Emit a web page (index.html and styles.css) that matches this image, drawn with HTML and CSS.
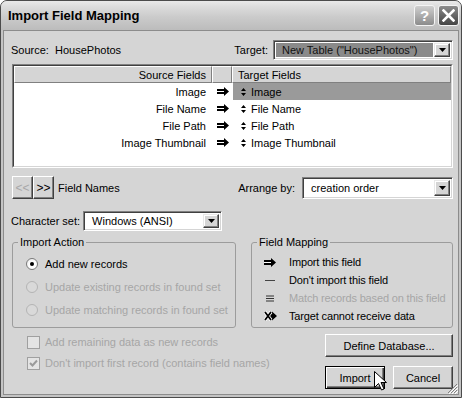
FILE: index.html
```html
<!DOCTYPE html>
<html>
<head>
<meta charset="utf-8">
<title>Import Field Mapping</title>
<link rel="stylesheet" href="styles.css">
</head>
<body>
<div class="window">
  <div class="titlebar">
    <span class="title">Import Field Mapping</span>
    <div class="tbtns">
      <span class="tbtn help">?</span>
      <span class="tbtn close"><svg width="13" height="13" viewBox="0 0 13 13"><path d="M1.5 1.5L11.5 11.5M11.5 1.5L1.5 11.5" stroke="#fff" stroke-width="2.6" stroke-linecap="square"/></svg></span>
    </div>
  </div>
  <div class="client">
    <div class="source-row">
      <span class="source">Source:&nbsp; HousePhotos</span>
      <div class="target">
        <span>Target:</span>
        <div class="combo combo-target">
          <span class="val val-dark">New Table ("HousePhotos")</span>
          <span class="drop"><svg width="7" height="4" viewBox="0 0 7 4"><path d="M0 0h7L3.5 4z"/></svg></span>
        </div>
      </div>
    </div>

    <div class="table">
      <div class="table-inner">
        <div class="grid">
          <div class="hcell hsrc">Source Fields</div>
          <div class="hcell harrow"></div>
          <div class="hcell htgt">Target Fields</div>

          <div class="src">Image</div>
          <div class="arr"><svg class="bigarrow" width="12" height="9" viewBox="0 0 12 9"><path d="M0 2h7V0l5 4.5L7 9V7H0z"/><path d="M0 4.5h7" stroke="#fff" stroke-width="1"/></svg></div>
          <div class="tgt sel"><svg class="updown" width="5" height="8" viewBox="0 0 5 8"><path d="M2.5 0L5 3H0zM0 5h5L2.5 8z"/></svg>Image</div>

          <div class="src">File Name</div>
          <div class="arr"><svg class="bigarrow" width="12" height="9" viewBox="0 0 12 9"><path d="M0 2h7V0l5 4.5L7 9V7H0z"/><path d="M0 4.5h7" stroke="#fff" stroke-width="1"/></svg></div>
          <div class="tgt"><svg class="updown" width="5" height="8" viewBox="0 0 5 8"><path d="M2.5 0L5 3H0zM0 5h5L2.5 8z"/></svg>File Name</div>

          <div class="src">File Path</div>
          <div class="arr"><svg class="bigarrow" width="12" height="9" viewBox="0 0 12 9"><path d="M0 2h7V0l5 4.5L7 9V7H0z"/><path d="M0 4.5h7" stroke="#fff" stroke-width="1"/></svg></div>
          <div class="tgt"><svg class="updown" width="5" height="8" viewBox="0 0 5 8"><path d="M2.5 0L5 3H0zM0 5h5L2.5 8z"/></svg>File Path</div>

          <div class="src">Image Thumbnail</div>
          <div class="arr"><svg class="bigarrow" width="12" height="9" viewBox="0 0 12 9"><path d="M0 2h7V0l5 4.5L7 9V7H0z"/><path d="M0 4.5h7" stroke="#fff" stroke-width="1"/></svg></div>
          <div class="tgt"><svg class="updown" width="5" height="8" viewBox="0 0 5 8"><path d="M2.5 0L5 3H0zM0 5h5L2.5 8z"/></svg>Image Thumbnail</div>
        </div>
      </div>
    </div>

    <div class="nav-row">
      <span class="btn navbtn disabled">&lt;&lt;</span>
      <span class="btn navbtn">&gt;&gt;</span>
      <span class="fieldnames">Field Names</span>
      <div class="arrange">
        <span>Arrange by:</span>
        <div class="combo combo-arrange">
          <span class="val">creation order</span>
          <span class="drop"><svg width="7" height="4" viewBox="0 0 7 4"><path d="M0 0h7L3.5 4z"/></svg></span>
        </div>
      </div>
    </div>

    <div class="char-row">
      <span>Character set:</span>
      <div class="combo combo-char">
        <span class="val">Windows (ANSI)</span>
        <span class="drop"><svg width="7" height="4" viewBox="0 0 7 4"><path d="M0 0h7L3.5 4z"/></svg></span>
      </div>
    </div>

    <div class="groups">
      <fieldset class="group group-action">
        <legend>Import Action</legend>
        <div class="radios">
          <div class="radio-row"><span class="radio checked"></span><span>Add new records</span></div>
          <div class="radio-row disabled"><span class="radio"></span><span>Update existing records in found set</span></div>
          <div class="radio-row disabled"><span class="radio"></span><span>Update matching records in found set</span></div>
        </div>
      </fieldset>
      <fieldset class="group group-mapping">
        <legend>Field Mapping</legend>
        <div class="legend-list">
          <div class="map-row"><span class="map-icon"><svg width="12" height="9" viewBox="0 0 12 9"><path d="M0 2h7V0l5 4.5L7 9V7H0z"/><path d="M0 4.5h7" stroke="#fff" stroke-width="1"/></svg></span><span>Import this field</span></div>
          <div class="map-row"><span class="map-icon"><svg width="12" height="9" viewBox="0 0 12 9"><path d="M1 4.5h10" stroke="#444" stroke-width="1"/></svg></span><span>Don't import this field</span></div>
          <div class="map-row disabled"><span class="map-icon"><svg width="12" height="9" viewBox="0 0 12 9"><path d="M2 2h8M2 4.5h8M2 7h8" stroke="#333" stroke-width="1.2"/></svg></span><span>Match records based on this field</span></div>
          <div class="map-row"><span class="map-icon"><svg width="13" height="10" viewBox="0 0 13 10"><path d="M3 3h5V0.5l5 4.5-5 4.5V7H3z"/><path d="M1 1l6 8M7 1L1 9" stroke="#fff" stroke-width="3.4"/><path d="M1 1l6 8M7 1L1 9" stroke="#000" stroke-width="1.8"/></svg></span><span>Target cannot receive data</span></div>
        </div>
      </fieldset>
    </div>

    <div class="bottom">
      <div class="checks">
        <div class="check-row"><span class="checkbox"></span><span>Add remaining data as new records</span></div>
        <div class="check-row"><span class="checkbox"><svg width="9" height="9" viewBox="0 0 9 9"><path d="M1 4l2.5 2.5L8 1.5" stroke="#9a9a9a" stroke-width="2" fill="none"/></svg></span><span>Don't import first record (contains field names)</span></div>
      </div>
      <div class="actions">
        <span class="btn wide">Define Database...</span>
        <div class="action-row">
          <span class="btn small default">Import</span>
          <span class="btn small">Cancel</span>
        </div>
      </div>
    </div>

    <svg class="grip" width="11" height="11" viewBox="0 0 11 11"><path d="M10 1L1 10M10 4L4 10M10 7L7 10" stroke="#808080" stroke-width="1"/><path d="M11 2L2 11M11 5L5 11M11 8L8 11" stroke="#fff" stroke-width="1"/></svg>
  </div>

  <svg class="cursor" width="13" height="20" viewBox="0 0 13 20"><path d="M0.5 0.5V16.5L4.5 12.5L7.5 19L10 18L7 11.5H12.5Z" fill="#fff" stroke="#000" stroke-width="1"/></svg>
</div>
</body>
</html>
```

FILE: styles.css
```css
* { box-sizing: border-box; }
html, body { margin: 0; padding: 0; background: #fff; }
body {
  font-family: "Liberation Sans", Arial, sans-serif;
  font-size: 11px;
  color: #000;
}
svg { display: block; }

.window {
  position: relative;
  width: 462px;
  height: 398px;
  border: 1px solid #4b4b4b;
  border-radius: 7px 7px 0 0;
  background: #c4c4c4;
  display: flex;
  flex-direction: column;
  overflow: hidden;
}

.titlebar {
  height: 29px;
  flex: none;
  display: flex;
  align-items: center;
  justify-content: space-between;
  padding: 0 2px 0 7px;
  background: linear-gradient(#e9e9e9 0%, #dcdcdc 20%, #cbcbcb 55%, #bcbcbc 100%);
}
.title { font-weight: bold; font-size: 13px; }
.tbtns { display: flex; gap: 3px; }
.tbtn {
  width: 21px;
  height: 21px;
  border: 1px solid #f4f4f4;
  border-radius: 3px;
  display: flex;
  align-items: center;
  justify-content: center;
}
.help {
  background: linear-gradient(#cfcfcf, #8c8c8c);
  color: #fff;
  font-weight: bold;
  font-size: 15px;
}
.close { background: linear-gradient(#8c8c8c, #444); }

.client {
  position: relative;
  flex: 1;
  margin: 0 2px 2px;
  border: 1px solid #8c8c8c;
  background: #d5d5d5;
  padding: 9px 5px 0 8px;
}

/* combos */
.combo {
  display: flex;
  height: 20px;
  border: 1px solid;
  border-color: #808080 #fff #fff #808080;
  background: #fff;
  box-shadow: inset 1px 1px 0 #404040, inset -1px -1px 0 #d5d5d5;
  padding: 2px;
}
.combo .val {
  flex: 1;
  display: flex;
  align-items: center;
  padding-left: 6px;
  white-space: nowrap;
  overflow: hidden;
}
.combo .val-dark { background: #8a8a8a; color: #111; margin-right: 1px; }
.combo .drop {
  width: 16px;
  flex: none;
  display: flex;
  align-items: center;
  justify-content: center;
  background: #d5d5d5;
  border: 1px solid;
  border-color: #e8e8e8 #404040 #404040 #e8e8e8;
  box-shadow: inset -1px -1px 0 #808080, inset 1px 1px 0 #fff;
}

.source-row {
  height: 20px;
  display: flex;
  align-items: center;
  justify-content: space-between;
}
.source { margin-left: -1px; }
.target { display: flex; align-items: center; gap: 5px; }
.combo-target { width: 180px; }

/* table */
.table {
  margin-top: 4px;
  height: 104px;
  border: 1px solid;
  border-color: #808080 #fff #fff #808080;
  background: #fff;
}
.table-inner {
  height: 100%;
  border: 1px solid;
  border-color: #404040 #d5d5d5 #d5d5d5 #404040;
}
.grid {
  display: grid;
  grid-template-columns: 198px 20px 1fr;
  grid-auto-rows: 17px;
}
.hcell {
  background: #d5d5d5;
  border-top: 1px solid #fff;
  border-left: 1px solid #fff;
  border-right: 1px solid #808080;
  border-bottom: 1px solid #808080;
  display: flex;
  align-items: center;
}
.hsrc { justify-content: flex-end; padding-right: 5px; }
.htgt { padding-left: 5px; }
.src {
  display: flex;
  align-items: center;
  justify-content: flex-end;
  padding-right: 6px;
}
.arr { display: flex; align-items: center; padding-left: 5px; }
.tgt {
  display: flex;
  align-items: center;
  padding-left: 9px;
  gap: 5px;
}
.tgt.sel { background: #9a9a9a; margin-left: 1px; padding-left: 8px; }

/* nav row */
.nav-row {
  margin-top: 8px;
  height: 23px;
  display: flex;
  align-items: center;
}
.btn {
  display: flex;
  align-items: center;
  justify-content: center;
  background: #d5d5d5;
  border: 1px solid;
  border-color: #fff #404040 #404040 #fff;
  box-shadow: inset -1px -1px 0 #808080;
}
.navbtn { width: 21px; height: 23px; font-size: 12px; }
.btn.disabled { color: #a8a8a8; }
.fieldnames { margin-left: 4px; }
.arrange { margin-left: auto; display: flex; align-items: center; gap: 7px; }
.combo-arrange { width: 151px; height: 22px; }

/* char row */
.char-row {
  margin-top: 12px;
  height: 20px;
  display: flex;
  align-items: center;
  gap: 3px;
}
.char-row > span { margin-left: -1px; }
.combo-char { width: 139px; }

/* groups */
.groups {
  margin-top: 5px;
  display: flex;
  gap: 15px;
}
.group {
  margin: 0;
  height: 92px;
  border: 1px solid #9c9c9c;
  border-radius: 3px;
  padding: 3px 0 0 13px;
  min-width: 0;
}
.group legend { padding: 0 2px; line-height: 13px; margin-left: -8px; }
.group-action { width: 224px; }
.group-mapping { width: 202px; padding-left: 12px; }
.group-mapping legend { margin-left: -7px; }

.radio-row {
  height: 23px;
  display: flex;
  align-items: center;
  gap: 7px;
}
.radio {
  width: 12px;
  height: 12px;
  border-radius: 50%;
  border: 1px solid #7a7a7a;
  background: radial-gradient(circle at 60% 60%, #fff 40%, #e2e2e2 100%);
  display: flex;
  align-items: center;
  justify-content: center;
}
.radio.checked::after {
  content: "";
  width: 4px;
  height: 4px;
  border-radius: 50%;
  background: #000;
}
.radio-row.disabled { color: #a6a6a6; }
.radio-row.disabled .radio { border-color: #b4b4b4; background: #d9d9d9; }

.legend-list { padding-top: 1px; letter-spacing: -0.15px; }
.map-row {
  height: 18px;
  display: flex;
  align-items: center;
  white-space: nowrap;
}
.map-icon { width: 25px; flex: none; display: flex; align-items: center; }
.map-row.disabled { color: #a6a6a6; }

/* bottom */
.bottom {
  margin-top: 6px;
  display: flex;
  justify-content: space-between;
}
.checks { padding: 2px 0 0 15px; color: #a6a6a6; }
.check-row {
  height: 21px;
  display: flex;
  align-items: flex-start;
  gap: 5px;
}
.checkbox {
  width: 13px;
  height: 13px;
  border: 1px solid #a0a0a0;
  background: #e4e4e4;
  display: flex;
  align-items: center;
  justify-content: center;
}
.check-row span:last-child { line-height: 13px; }
.actions { width: 128px; display: flex; flex-direction: column; }
.wide { height: 23px; }
.action-row {
  margin-top: 9px;
  display: flex;
  justify-content: space-between;
}
.small { width: 60px; height: 23px; }
.btn.default {
  border: 1px solid #000;
  box-shadow: inset 1px 1px 0 #fff, inset -1px -1px 0 #404040, inset -2px -2px 0 #808080;
}

.grip { position: absolute; right: 0; bottom: 0; }
.cursor { position: absolute; left: 373px; top: 370px; }
```
